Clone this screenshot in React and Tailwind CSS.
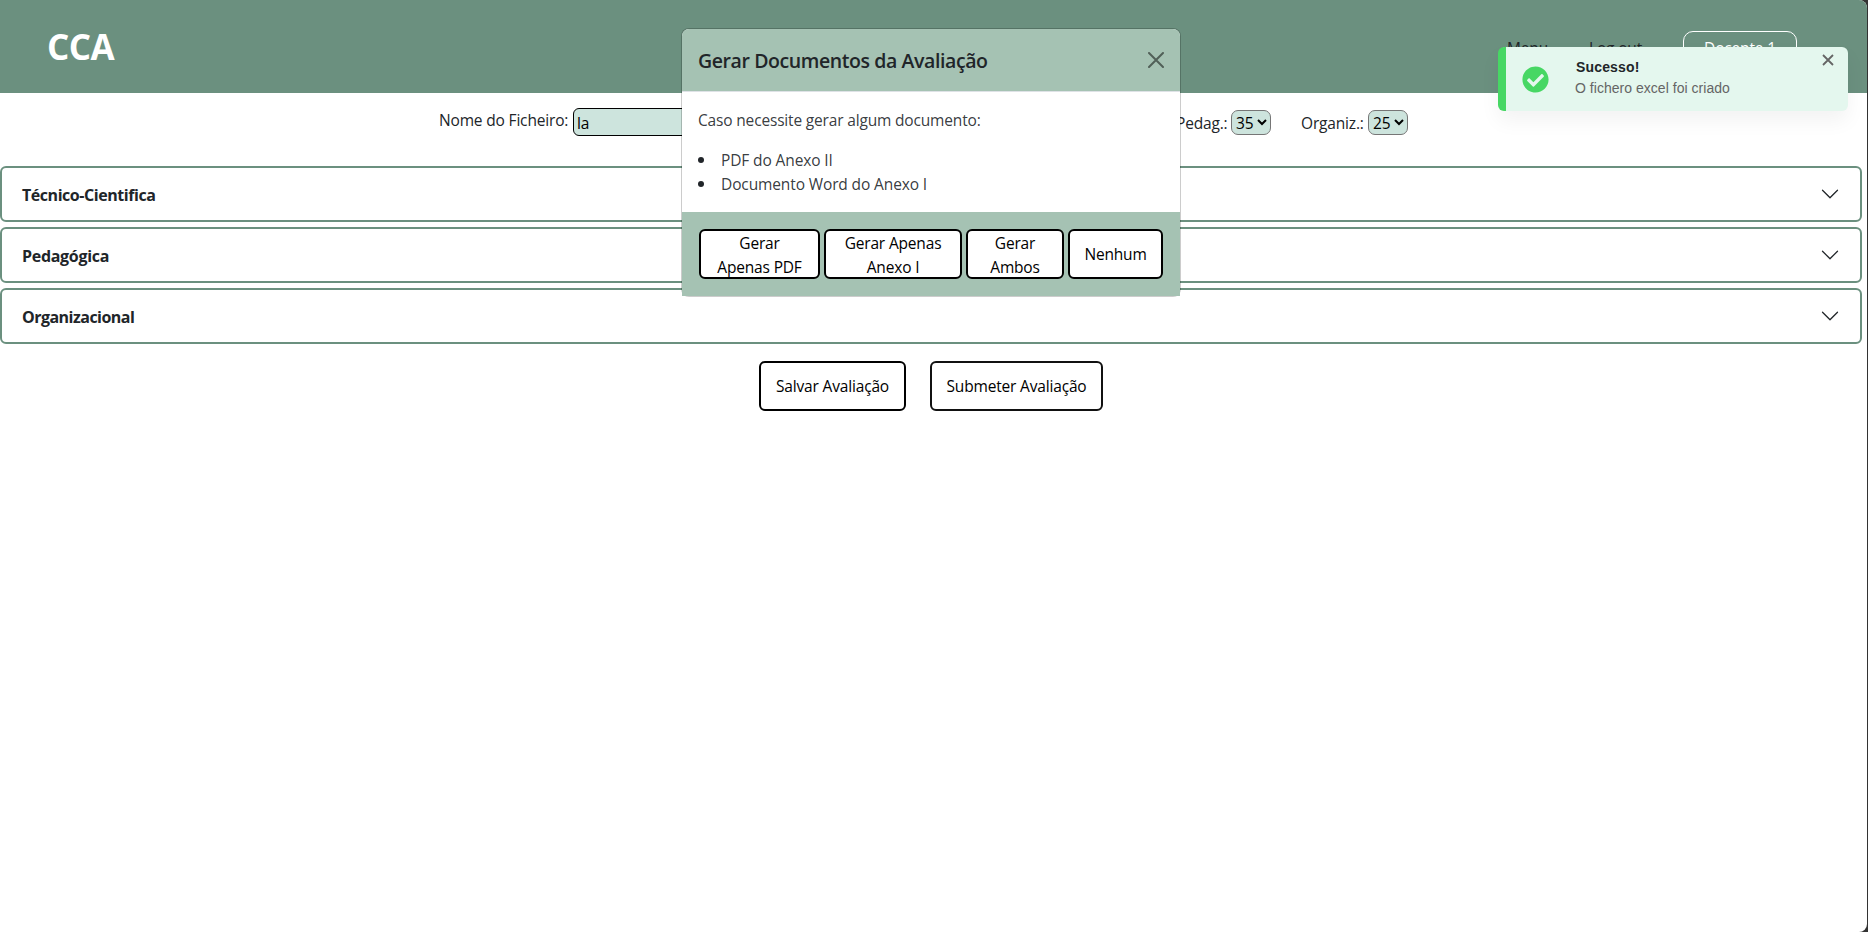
import React from "react";

function Chevron() {
  return (
    <svg viewBox="0 0 16 16" className="size-5 shrink-0" fill="#212529">
      <path fillRule="evenodd" d="M1.646 4.646a.5.5 0 0 1 .708 0L8 10.293l5.646-5.647a.5.5 0 0 1 .708.708l-6 6a.5.5 0 0 1-.708 0l-6-6a.5.5 0 0 1 0-.708z" />
    </svg>
  );
}

function Panel({ title, className }) {
  return (
    <section className="flex h-14 items-center justify-between rounded-md border-2 border-[#6b907f] bg-white pr-[20px] pl-[20px]">
      <h2 className={"pt-[2px] text-base font-bold whitespace-nowrap " + className}>{title}</h2>
      <Chevron />
    </section>
  );
}

function Select({ value }) {
  return (
    <button className="flex h-[25px] w-10 items-center justify-between rounded-[7px] border border-[#767676] bg-[#cde4dd] pr-[3px] pl-[4px] text-black">
      <span className="pt-px tracking-[-0.2px]">{value}</span>
      <svg viewBox="0 0 10 7" className="mb-px h-[7px] w-[10px]" fill="none" stroke="#000" strokeWidth="2">
        <path d="M1 1l4 4 4-4" />
      </svg>
    </button>
  );
}

export default function App() {
  return (
    <div className="h-[932px] w-[1868px] overflow-hidden bg-[#333] pr-px font-['Open_Sans','Noto_Sans',sans-serif] text-[15.5px] leading-6 font-[370] tracking-[-0.17px] text-[#212529]">
      <div className="relative h-full overflow-hidden rounded-r-lg bg-white">
        <header className="flex h-[93px] items-start justify-between bg-[#6b907f] pr-[70px] pl-[47px]">
          <h1 className="pt-[27px] text-[35px] leading-10 font-bold tracking-[-0.6px] text-white">CCA</h1>
          <nav className="flex items-start pt-[31px]">
            <span className="mr-[40px] w-[42px] pt-[5px] whitespace-nowrap">Menu</span>
            <span className="mr-[39px] w-[55px] pt-[5px] whitespace-nowrap">Log out</span>
            <span className="h-[34px] w-[114px] rounded-[10px] border border-white pt-[4px] text-center whitespace-nowrap text-white">Docente 1</span>
          </nav>
        </header>

        <form className="flex h-[73px] items-start pt-[15px] pl-[439px]">
          <label className="w-[134px] whitespace-nowrap">Nome do Ficheiro:</label>
          <div className="h-7 w-[200px] rounded-md border border-black bg-[#cde4dd] pt-[2px] pl-[3px] text-black">la</div>
          <div className="ml-[403px] flex items-center pt-[2px]">
            <label className="w-[55px] whitespace-nowrap">Pedag.:</label>
            <Select value="35" />
          </div>
          <div className="ml-[30px] flex items-center pt-[2px]">
            <label className="w-[67px] whitespace-nowrap">Organiz.:</label>
            <Select value="25" />
          </div>
        </form>

        <main className="flex w-[1862px] flex-col gap-[5px]">
          <Panel title="Técnico-Cientifica" className="tracking-[-0.45px]" />
          <Panel title="Pedagógica" className="tracking-[-0.3px]" />
          <Panel title="Organizacional" className="tracking-[-0.52px]" />
          <div className="mt-3 flex justify-center gap-6">
            <button className="h-[50px] w-[147px] rounded-md border-2 border-black whitespace-nowrap text-black">Salvar Avaliação</button>
            <button className="h-[50px] w-[173px] rounded-md border-2 border-[#111] whitespace-nowrap text-black">Submeter Avaliação</button>
          </div>
        </main>

        <div role="dialog" className="absolute top-7 left-[681px] w-[500px] rounded-lg border border-black/20 bg-white bg-clip-padding">
          <div className="flex h-[63px] items-center justify-between rounded-t-[7px] border-b border-[#dee2e6] bg-[#a5c2b3] pr-4 pl-4">
            <h5 className="pt-[2px] text-[19.5px] font-semibold tracking-[-0.41px] whitespace-nowrap">Gerar Documentos da Avaliação</h5>
            <svg viewBox="0 0 16 16" className="size-4 opacity-50" stroke="#000" strokeWidth="2" strokeLinecap="round">
              <path d="M1 1l14 14M15 1L1 15" />
            </svg>
          </div>
          <div className="h-[120px] px-4 pt-4 text-[#212529]/90">
            <p className="mb-4 whitespace-nowrap">Caso necessite gerar algum documento:</p>
            <ul className="tracking-[-0.12px]">
              <li className="flex items-center"><span className="mr-[17px] size-1.5 rounded-full bg-[#212529]" />PDF do Anexo II</li>
              <li className="flex items-center"><span className="mr-[17px] size-1.5 rounded-full bg-[#212529]" />Documento Word do Anexo I</li>
            </ul>
          </div>
          <div className="flex h-[84px] items-start gap-1 bg-[#a5c2b3] pt-[17px] pl-[17px] text-black">
            <button className="h-[50px] w-[121px] rounded-md border-2 border-black bg-white">Gerar<br />Apenas PDF</button>
            <button className="h-[50px] w-[138px] rounded-md border-2 border-black bg-white">Gerar Apenas<br />Anexo I</button>
            <button className="h-[50px] w-[98px] rounded-md border-2 border-black bg-white">Gerar<br />Ambos</button>
            <button className="h-[50px] w-[95px] rounded-md border-2 border-black bg-white">Nenhum</button>
          </div>
        </div>

        <div role="alert" className="absolute top-[47px] left-[1498px] flex h-16 w-[350px] items-start overflow-visible rounded-md border-l-8 border-[#47d764] bg-[#e4f7ee] font-['Liberation_Sans',sans-serif] font-normal tracking-normal shadow-[0_10px_20px_rgba(0,0,0,0.05)]">
          <svg viewBox="0 0 512 512" className="mt-[18.5px] ml-[16px] size-[27px]" fill="#47d764">
            <path d="M504 256c0 136.967-111.033 248-248 248S8 392.967 8 256 119.033 8 256 8s248 111.033 248 248zM227.314 387.314l184-184c6.248-6.248 6.248-16.379 0-22.627l-22.627-22.627c-6.248-6.249-16.379-6.249-22.628 0L216 308.118l-70.059-70.059c-6.248-6.248-16.379-6.248-22.628 0l-22.627 22.627c-6.248 6.248-6.248 16.379 0 22.627l104 104c6.249 6.249 16.379 6.249 22.628.001z" />
          </svg>
          <div className="ml-[26px] pt-[10px] text-sm leading-[21px] whitespace-nowrap">
            <p className="pl-px font-bold tracking-[0.15px]">Sucesso!</p>
            <p className="tracking-[0.03px] text-[#656565]">O fichero excel foi criado</p>
          </div>
          <svg viewBox="0 0 12 12" className="mt-[6.5px] mr-[14px] ml-auto size-3" stroke="#656565" strokeWidth="1.8">
            <path d="M1 1l10 10M11 1L1 11" />
          </svg>
        </div>
      </div>
    </div>
  );
}
